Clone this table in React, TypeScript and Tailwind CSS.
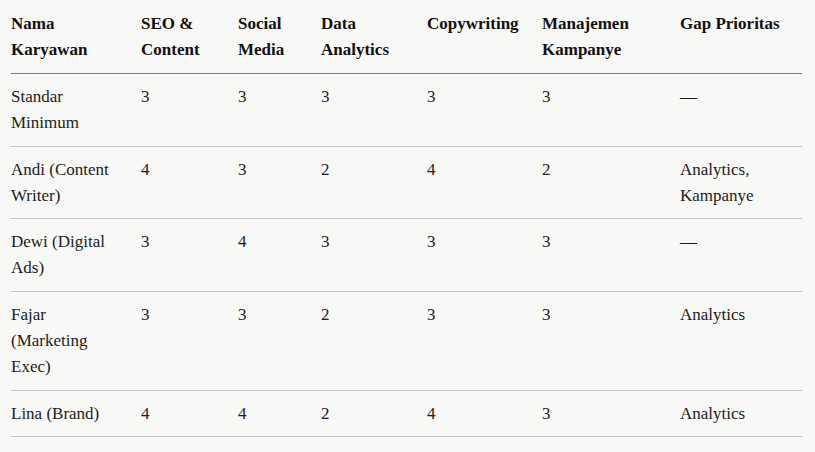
const headers = ["Nama Karyawan", "SEO & Content", "Social Media", "Data Analytics", "Copywriting", "Manajemen Kampanye", "Gap Prioritas"]

const widths = ["w-[130px]", "w-[97px]", "w-[83px]", "w-[106px]", "w-[115px]", "w-[138px]", "w-[122px]"]

// bottom padding per row, tuned to the reference row heights
const rowPad = ["pb-[10px]", "pb-[9px]", "pb-[10px]", "pb-[10px]", "pb-[9px]"]

const rows: string[][] = [
    ["Standar Minimum", "3", "3", "3", "3", "3", "—"],
    ["Andi (Content Writer)", "4", "3", "2", "4", "2", "Analytics, Kampanye"],
    ["Dewi (Digital Ads)", "3", "4", "3", "3", "3", "—"],
    ["Fajar (Marketing Exec)", "3", "3", "2", "3", "3", "Analytics"],
    ["Lina (Brand)", "4", "4", "2", "4", "3", "Analytics"],
]

export default function App() {
    return (
        <main className="min-h-screen bg-[#f8f8f6] pl-[11px] text-[#1c1c1c] font-['Liberation_Serif',serif] text-[17px] leading-[26px]">
            <table className="table-fixed w-[791px] border-collapse">
                <colgroup>
                    {widths.map((w, i) => (
                        <col key={i} className={w} />
                    ))}
                </colgroup>
                <thead>
                    <tr className="border-b border-[#7a7a78]">
                        {headers.map((h, i) => (
                            <th
                                key={h}
                                className={`text-left align-top font-bold text-[#111] pt-[11px] pb-[10px] ${i === 0 ? "pr-[20px]" : "pr-3"}`}
                            >
                                {h}
                            </th>
                        ))}
                    </tr>
                </thead>
                <tbody>
                    {rows.map((r, ri) => (
                        <tr key={r[0]} className="border-b border-[#c4c4c2]">
                            {r.map((c, i) => (
                                <td
                                    key={i}
                                    className={`align-top pt-[10px] ${rowPad[ri]} ${i === 0 ? "pr-[20px]" : "pr-3"}`}
                                >
                                    {c}
                                </td>
                            ))}
                        </tr>
                    ))}
                </tbody>
            </table>
        </main>
    )
}
